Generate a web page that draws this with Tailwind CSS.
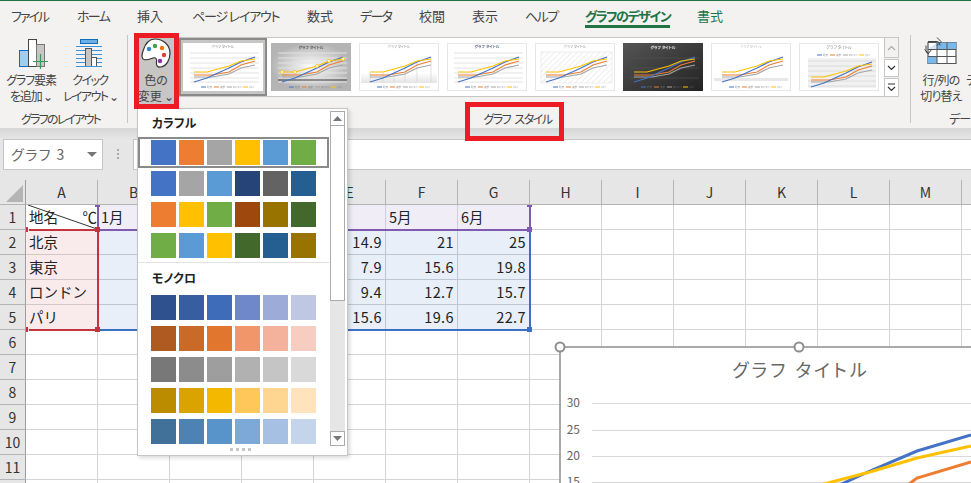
<!DOCTYPE html>
<html lang="ja">
<head>
  <meta charset="UTF-8" />
  <title>Excel グラフのデザイン</title>
  <script src="https://cdn.jsdelivr.net/npm/@tailwindcss/browser@4"></script>
</head>
<body class="bg-white font-['Noto_Sans_CJK_JP','Noto_Sans',sans-serif] text-[#333]">
<div class="relative w-[971px] h-[483px] overflow-hidden">

  <!-- shared bits for the style thumbnails -->
  <svg class="absolute w-0 h-0">
    <defs>
      <g id="series" fill="none" stroke-width="1.2">
        <polyline stroke="#a5a5a5" points="11,34 29,34 46,31 58,25 72,22" />
        <polyline stroke="#ed7d31" points="11,32 29,32 46,29 58,22 72,18" />
        <polyline stroke="#4472c4" points="11,39 24,35 46,25 58,19 72,14" />
        <polyline stroke="#ffc000" points="11,29 24,29 46,23 58,18 72,16" />
      </g>
      <g id="legend" stroke-width="1" font-size="2.6" fill="#777">
        <line x1="18" x2="23" y1="44" y2="44" stroke="#4472c4" /><text x="24" y="45">北京</text>
        <line x1="31" x2="36" y1="44" y2="44" stroke="#ed7d31" /><text x="37" y="45">東京</text>
        <line x1="44" x2="49" y1="44" y2="44" stroke="#a5a5a5" /><text x="50" y="45">ロンドン</text>
        <line x1="60" x2="65" y1="44" y2="44" stroke="#ffc000" /><text x="66" y="45">パリ</text>
      </g>
      <g id="grid" stroke="#e2e2e2" stroke-width="1">
        <line x1="7" x2="76" y1="10" y2="10" /><line x1="7" x2="76" y1="15" y2="15" />
        <line x1="7" x2="76" y1="20" y2="20" /><line x1="7" x2="76" y1="25" y2="25" />
        <line x1="7" x2="76" y1="30" y2="30" /><line x1="7" x2="76" y1="35" y2="35" />
        <line x1="7" x2="76" y1="39" y2="39" />
      </g>
      <linearGradient id="floor" x1="0" x2="0" y1="0" y2="1"><stop offset="0" stop-color="#fff" /><stop offset="1" stop-color="#e4e4e4" /></linearGradient>
      <radialGradient id="silver"><stop offset="0" stop-color="#fff" /><stop offset="1" stop-color="#b4b4b4" /></radialGradient>
      <linearGradient id="night" x1="0" x2="1" y1="0" y2="1"><stop offset="0" stop-color="#555" /><stop offset="1" stop-color="#222" /></linearGradient>
      <pattern id="hatch" width="4" height="4" patternUnits="userSpaceOnUse" patternTransform="rotate(45)"><line x1="0" x2="0" y1="0" y2="4" stroke="#d4d4d4" stroke-width="0.8" /></pattern>
    </defs>
  </svg>

  <!-- tabs -->
  <div class="border-t border-[#217346] bg-[#f3f2f1] h-[28px] flex pl-[11px] gap-[27px] text-[13px] leading-[30px] whitespace-nowrap text-[#444] [font-feature-settings:'palt']">
    <div class="w-[39px] tracking-[-2px]">ファイル</div>
    <div class="w-[33px] tracking-[-1.700px]">ホーム</div>
    <div class="w-[28px]">挿入</div>
    <div class="w-[88px] tracking-[-1.200px]">ページ レイアウト</div>
    <div class="w-[26px]">数式</div>
    <div class="w-[32px] tracking-[-1.700px]">データ</div>
    <div class="w-[26px]">校閲</div>
    <div class="w-[26px]">表示</div>
    <div class="w-[33px] tracking-[-1.500px]">ヘルプ</div>
    <div class="w-[85px] h-[27px] border-b-[3px] border-[#217346] text-[#217346] font-bold tracking-[-1.500px]">グラフのデザイン</div>
    <div class="w-[26px] text-[#217346]">書式</div>
  </div>

  <!-- ribbon -->
  <div class="bg-[#f3f2f1] h-[100px] flex text-[12px] leading-[16px] text-[#444] [font-feature-settings:'palt'] whitespace-nowrap">
    <div class="w-[127px] flex flex-col">
      <div class="h-[83px] flex pt-[9px]">
        <div class="w-[62px] flex flex-col items-center">
          <div class="h-[35px] ml-[5px]">
            <svg width="32" height="32" viewBox="0 0 32 32">
              <rect x="1.5" y="13.5" width="9" height="16" fill="#a3cdf0" stroke="#0f6cbd" />
              <rect x="10.5" y="2.5" width="8" height="27" fill="#fff" stroke="#444" />
              <rect x="18.5" y="7.5" width="8" height="22" fill="#c8c6c4" stroke="#777" />
              <path d="M15 24.5h15M22.5 17v15" stroke="#2f9e5b" stroke-width="1.2" />
            </svg>
          </div>
          <div class="text-center tracking-[-1.100px]">グラフ要素<br />を追加 ⌄</div>
        </div>
        <div class="w-[56px] flex flex-col items-center">
          <div class="h-[35px]">
            <svg width="32" height="32" viewBox="0 0 32 32">
              <rect x="6.5" y="2.5" width="17" height="4" fill="#6cb0e6" stroke="#0f6cbd" />
              <path d="M2 9.5h26M2 13.5h26M2 17.5h26M2 21.5h26M2 25.5h26" stroke="#3b95dd" />
              <rect x="11.5" y="11.5" width="6" height="18" fill="#c8c6c4" stroke="#555" />
              <rect x="17.5" y="20.5" width="5" height="9" fill="#fff" stroke="#555" />
              <path d="M2 29.5h26" stroke="#3b95dd" />
            </svg>
          </div>
          <div class="text-center tracking-[-1.600px]">クイック<br />レイアウト ⌄</div>
        </div>
      </div>
      <div class="text-center pr-[6px] tracking-[-1.800px]">グラフのレイアウト</div>
    </div>
    <div class="w-px h-[88px] mt-[7px] bg-[#c8c6c4]"></div>

    <div class="w-[782px] flex flex-col">
      <div class="h-[83px] flex pl-[10px] pt-[9px]">
        <div class="w-[36px] h-[68px] bg-[#c8c6c4] flex flex-col items-center">
          <div class="h-[35px] pt-[1px]">
            <svg width="30" height="30" viewBox="0 0 30 30">
              <path d="M14 1C22 1 29 7 29 15c0 6-3 13-9 14-4 .5-5-2-4.500-5 .5-3-.5-5-3.500-4-3 1-6 2.500-9 1.500C.5 21 .5 17 2 13 4 6 8 1 14 1Z" fill="#fff" stroke="#333" stroke-width="1.200" />
              <circle cx="8" cy="11" r="2.200" fill="#2e86d1" />
              <circle cx="14" cy="8" r="2.200" fill="#3fa34d" />
              <circle cx="21" cy="10" r="2.200" fill="#e8780c" />
              <circle cx="23" cy="17" r="2.200" fill="#e03c3c" />
              <circle cx="19" cy="23" r="2.200" fill="#8b2fa8" />
            </svg>
          </div>
          <div class="text-center">色の<br />変更 ⌄</div>
        </div>
        <div class="ml-[5px] w-[705px] h-[60px] bg-white border-y border-[#c8c6c4] flex">
          <div class="w-[88px] h-[58px] border-2 border-[#8a8a8a] bg-[#c8c6c4] flex items-center justify-center">
            <svg class="blur-[0.3px]" width="80" height="48" viewBox="0 0 80 48"><rect width="80" height="48" fill="#fff" /><text x="40" y="5" font-size="3.600" fill="#888" text-anchor="middle">グラフ タイトル</text><use href="#grid" /><use href="#series" /><use href="#legend" /></svg>
          </div>
          <div class="w-[88px] h-[58px] flex items-center justify-center">
            <svg class="blur-[0.3px]" width="80" height="48" viewBox="0 0 80 48"><rect width="80" height="48" fill="url(#silver)" /><text x="40" y="5.500" font-size="3.800" font-weight="700" fill="#555" text-anchor="middle">グラフ タイトル</text><use href="#grid" /><line x1="7" x2="76" y1="37" y2="37" stroke="#444" stroke-width="1" /><use href="#series" /><g fill="#fff" stroke="#ffc000" stroke-width="0.800"><circle cx="11" cy="29" r="1.500" /><circle cx="24" cy="29" r="1.500" /><circle cx="46" cy="23" r="1.500" /><circle cx="58" cy="18" r="1.500" /><circle cx="72" cy="16" r="1.500" /></g><use href="#legend" /></svg>
          </div>
          <div class="w-[88px] h-[58px] flex items-center justify-center">
            <svg class="blur-[0.3px]" width="80" height="48" viewBox="0 0 80 48"><rect x="0.500" y="0.500" width="79" height="47" fill="#fff" stroke="#e6e6e6" /><rect x="2" y="30" width="76" height="10" fill="url(#floor)" /><text x="40" y="5" font-size="3.600" fill="#999" text-anchor="middle">グラフ タイトル</text><path d="M11 39V29M24 39V29M35 39V25M46 39V23M58 39V18M72 39V14" stroke="#ccc" stroke-width="0.600" /><use href="#series" /><use href="#legend" /></svg>
          </div>
          <div class="w-[88px] h-[58px] flex items-center justify-center">
            <svg class="blur-[0.3px]" width="80" height="48" viewBox="0 0 80 48"><rect x="0.500" y="0.500" width="79" height="47" fill="#fff" stroke="#e6e6e6" /><text x="40" y="5" font-size="3.800" font-weight="700" fill="#5a6a80" text-anchor="middle">グラフ タイトル</text><g stroke="#eceff5"><use href="#grid" /></g><use href="#series" /><use href="#legend" /></svg>
          </div>
          <div class="w-[88px] h-[58px] flex items-center justify-center">
            <svg class="blur-[0.3px]" width="80" height="48" viewBox="0 0 80 48"><rect x="0.500" y="0.500" width="79" height="47" fill="#fff" stroke="#e6e6e6" /><rect x="6" y="9" width="71" height="31" fill="url(#hatch)" stroke="#ddd" stroke-width="0.500" /><text x="40" y="5" font-size="3.600" fill="#999" text-anchor="middle">グラフ タイトル</text><use href="#series" /><use href="#legend" /></svg>
          </div>
          <div class="w-[88px] h-[58px] flex items-center justify-center">
            <svg class="blur-[0.3px]" width="80" height="48" viewBox="0 0 80 48"><rect width="80" height="48" fill="url(#night)" /><text x="40" y="5.500" font-size="3.800" font-weight="700" fill="#eee" text-anchor="middle">グラフ タイトル</text><path d="M7 15h69M7 25h69M7 35h69" stroke="#555" stroke-width="0.600" /><use href="#series" /><use href="#legend" /></svg>
          </div>
          <div class="w-[88px] h-[58px] flex items-center justify-center">
            <svg class="blur-[0.3px]" width="80" height="48" viewBox="0 0 80 48"><rect x="0.500" y="0.500" width="79" height="47" fill="#fff" stroke="#e6e6e6" /><rect x="3" y="35" width="74" height="3" fill="#e8e8e8" /><text x="40" y="5" font-size="3.400" fill="#bbb" text-anchor="middle">グラフ タイトル</text><use href="#series" /><use href="#legend" /></svg>
          </div>
          <div class="w-[88px] h-[58px] flex items-center justify-center">
            <svg class="blur-[0.3px]" width="80" height="48" viewBox="0 0 80 48"><rect x="0.500" y="0.500" width="79" height="47" fill="#fff" stroke="#e6e6e6" /><rect x="9" y="15" width="68" height="30" fill="#f1f1f1" /><path d="M9 18h68M9 23h68M9 28h68M9 33h68M9 38h68M9 43h68" stroke="#dcdcdc" /><text x="40" y="6" font-size="4" fill="#888" text-anchor="middle">グラフ タイトル</text><g transform="translate(0 -32)"><use href="#legend" /></g><g transform="translate(1 5)"><use href="#series" /></g></svg>
          </div>
        </div>
        <div class="w-[15px] flex flex-col gap-[1px]">
          <div class="h-[21px] border border-[#c8c6c4] bg-[#f3f2f1] flex items-center justify-center">
            <svg width="9" height="6" viewBox="0 0 9 6"><path d="M1 5l3.500-3.500L8 5" fill="none" stroke="#aaa" stroke-width="1.200" /></svg>
          </div>
          <div class="h-[18px] border border-[#c8c6c4] bg-white flex items-center justify-center">
            <svg width="9" height="6" viewBox="0 0 9 6"><path d="M1 1l3.500 3.500L8 1" fill="none" stroke="#333" stroke-width="1.200" /></svg>
          </div>
          <div class="h-[19px] border border-[#c8c6c4] bg-white flex items-center justify-center">
            <svg width="9" height="9" viewBox="0 0 9 9"><path d="M1 1h7M1 4l3.500 3.500L8 4" fill="none" stroke="#333" stroke-width="1.200" /></svg>
          </div>
        </div>
      </div>
      <div class="text-center pr-[3px] tracking-[-1.500px] [word-spacing:3px]">グラフ スタイル</div>
    </div>
    <div class="w-px h-[88px] mt-[7px] bg-[#c8c6c4]"></div>

    <div class="flex-1 min-w-0 overflow-hidden flex flex-col">
      <div class="h-[83px] flex pt-[9px]">
        <div class="ml-[10px] w-[40px] shrink-0 flex flex-col items-center">
          <div class="h-[35px]">
            <svg width="36" height="30" viewBox="0 0 36 30">
              <path d="M5 5.500h28v21H5Z" fill="#fff" stroke="#555" stroke-width="1.200" />
              <path d="M14 5.500h19v7H14ZM5 19.500h9v7H5Z" fill="#7ab8ea" />
              <path d="M5 12.500 14 5.500v7Z" fill="#cfe4f6" />
              <path d="M5 12.500h28M5 19.500h28M14 5.500v21M24 5.500v21" stroke="#555" fill="none" />
              <path d="M5 4.500h8c3 0 4 1.500 4 4M14 .5l4 4-4 4M3 8.500v5c0 2 1 3 3 3M1.500 12.500l4 4 3-4" fill="none" stroke="#444" />
            </svg>
          </div>
          <div class="text-center tracking-[-0.800px]">行/列の<br />切り替え</div>
        </div>
        <div class="ml-[5px] pt-[35px]">デ</div>
      </div>
      <div class="pl-[38px] tracking-[-1px]">デー</div>
    </div>
  </div>

  <!-- name box and formula bar -->
  <div class="h-[52px] bg-[#e6e6e6]">
    <div class="h-[11px] bg-gradient-to-b from-[#d6d6d6] to-[#e6e6e6]"></div>
    <div class="flex pl-[3px]">
      <div class="w-[100px] h-[31px] bg-white border border-[#c8c6c4] flex items-center justify-between pl-[7px] pr-[5px] text-[14px] tracking-[1.500px] text-[#666] [font-feature-settings:'palt']">
        <span>グラフ 3</span>
        <svg width="10" height="5" viewBox="0 0 10 5"><path d="M0 0h10L5 5Z" fill="#777" /></svg>
      </div>
      <div class="w-[30px] flex flex-col items-center gap-[2px] pt-[10px]">
        <div class="w-[2px] h-[2px] bg-[#aaa]"></div>
        <div class="w-[2px] h-[2px] bg-[#aaa]"></div>
        <div class="w-[2px] h-[2px] bg-[#aaa]"></div>
      </div>
      <div class="flex-1 h-[31px] bg-white border border-[#c8c6c4] border-r-0"></div>
    </div>
  </div>

  <!-- sheet -->
  <div class="relative h-[303px] overflow-hidden">
    <div id="sheet" class="grid grid-cols-[26px_repeat(14,72px)] auto-rows-[25px] text-[14.500px] leading-[23px] text-[#222]"></div>

    <div class="absolute left-0 top-0 w-[26px] h-[25px] flex items-center justify-center">
      <svg width="24" height="24" viewBox="0 0 24 24"><path d="M22 4v17H5Z" fill="#b4b4b4" /></svg>
    </div>
    <svg class="absolute left-[26px] top-[25px]" width="72" height="25" viewBox="0 0 72 25"><line x1="2" y1="0" x2="71" y2="24" stroke="#333" /></svg>

    <!-- coloured range outlines that Excel draws around the chart data -->
    <div class="absolute left-[97px] top-[27px] w-[434px] h-[24px] border-x-2 border-b-2 border-[#7f5bb0]"></div>
    <div class="absolute left-[99px] top-[51px] w-[432px] h-[100px] border-r-2 border-b-2 border-[#3b6fc4]"></div>
    <div class="absolute left-[29px] top-[49px] w-[70px] h-[102px] border-y-2 border-r-2 border-[#c4333e]"></div>
    <div class="absolute left-[95px] top-[25px] w-[5px] h-[2px] bg-[#7f5bb0]"></div>
    <div class="absolute left-[527px] top-[25px] w-[5px] h-[2px] bg-[#7f5bb0]"></div>
    <div class="absolute left-[527px] top-[47px] w-[5px] h-[5px] bg-[#7f5bb0]"></div>
    <div class="absolute left-[527px] top-[147px] w-[5px] h-[5px] bg-[#3b6fc4]"></div>
    <div class="absolute left-[95px] top-[47px] w-[5px] h-[5px] bg-[#c4333e]"></div>
    <div class="absolute left-[95px] top-[147px] w-[5px] h-[5px] bg-[#c4333e]"></div>
    <div class="absolute left-[26px] top-[47px] w-[2px] h-[5px] bg-[#c4333e]"></div>
    <div class="absolute left-[26px] top-[147px] w-[2px] h-[5px] bg-[#c4333e]"></div>
  </div>

  <!-- chart, floats over the sheet and runs off the window -->
  <svg class="absolute left-[554px] top-[341px]" width="417" height="142" viewBox="554 341 417 142">
    <rect x="560" y="347" width="420" height="150" fill="#fff" stroke="#8f8f8f" stroke-width="1.500" />
    <g stroke="#d9d9d9"><line x1="592" x2="971" y1="403.500" y2="403.500" /><line x1="592" x2="971" y1="430.500" y2="430.500" /><line x1="592" x2="971" y1="456.500" y2="456.500" /><line x1="592" x2="971" y1="482.500" y2="482.500" /></g>
    <g font-size="12" fill="#666" text-anchor="end" font-family="'Noto Sans CJK JP',sans-serif"><text x="580" y="407">30</text><text x="580" y="434">25</text><text x="580" y="460">20</text><text x="580" y="486">15</text></g>
    <text x="801" y="377" font-size="18" fill="#666" text-anchor="middle" letter-spacing="3" font-family="'Noto Sans CJK JP',sans-serif" class="[font-feature-settings:'palt']">グラフ タイトル</text>
    <g fill="none" stroke-width="3">
      <polyline stroke="#ed7d31" points="905,487 917,478 971,462" />
      <polyline stroke="#4472c4" points="835,487 870,471 917,451 971,435" />
      <polyline stroke="#ffc000" points="820,485 870,472 917,458 971,446" />
    </g>
    <circle cx="560" cy="347" r="4.500" fill="#fff" stroke="#8f8f8f" stroke-width="2" />
    <circle cx="799" cy="347" r="4.500" fill="#fff" stroke="#8f8f8f" stroke-width="2" />
  </svg>

  <!-- colour dropdown -->
  <div class="absolute left-[137px] top-[108px] w-[211px] h-[348px] bg-white border border-[#c6c6c6] shadow-[2px_2px_4px_rgba(0,0,0,0.15)] flex">
    <div class="w-[192px] shrink-0">
      <div class="h-[28px] flex items-center pl-[14px] text-[12px] font-bold text-[#222] [font-feature-settings:'palt']">カラフル</div>
      <div class="w-[191px] h-[31px] border-2 border-[#8a8a8a] pl-[11px] pt-[1px] flex gap-[3px]">
        <div class="w-[25px] h-[25px] bg-[#4472c4]"></div><div class="w-[25px] h-[25px] bg-[#ed7d31]"></div><div class="w-[25px] h-[25px] bg-[#a5a5a5]"></div><div class="w-[25px] h-[25px] bg-[#ffc000]"></div><div class="w-[25px] h-[25px] bg-[#5b9bd5]"></div><div class="w-[25px] h-[25px] bg-[#70ad47]"></div>
      </div>
      <div class="pl-[13px] pt-[3px] flex flex-col gap-[6px]">
        <div class="flex gap-[3px]"><div class="w-[25px] h-[25px] bg-[#4472c4]"></div><div class="w-[25px] h-[25px] bg-[#a5a5a5]"></div><div class="w-[25px] h-[25px] bg-[#5b9bd5]"></div><div class="w-[25px] h-[25px] bg-[#264478]"></div><div class="w-[25px] h-[25px] bg-[#636363]"></div><div class="w-[25px] h-[25px] bg-[#255e91]"></div></div>
        <div class="flex gap-[3px]"><div class="w-[25px] h-[25px] bg-[#ed7d31]"></div><div class="w-[25px] h-[25px] bg-[#ffc000]"></div><div class="w-[25px] h-[25px] bg-[#70ad47]"></div><div class="w-[25px] h-[25px] bg-[#9e480e]"></div><div class="w-[25px] h-[25px] bg-[#997300]"></div><div class="w-[25px] h-[25px] bg-[#43682b]"></div></div>
        <div class="flex gap-[3px]"><div class="w-[25px] h-[25px] bg-[#70ad47]"></div><div class="w-[25px] h-[25px] bg-[#5b9bd5]"></div><div class="w-[25px] h-[25px] bg-[#ffc000]"></div><div class="w-[25px] h-[25px] bg-[#43682b]"></div><div class="w-[25px] h-[25px] bg-[#255e91]"></div><div class="w-[25px] h-[25px] bg-[#997300]"></div></div>
      </div>
      <div class="mt-[4px] h-px w-[191px] bg-[#e1e1e1]"></div>
      <div class="h-[32px] pb-[2px] flex items-center pl-[14px] text-[12px] font-bold text-[#222] [font-feature-settings:'palt']">モノクロ</div>
      <div class="pl-[13px] flex flex-col gap-[6px]">
        <div class="flex gap-[3px]"><div class="w-[25px] h-[25px] bg-[#2f528f]"></div><div class="w-[25px] h-[25px] bg-[#385ea2]"></div><div class="w-[25px] h-[25px] bg-[#3f6cb9]"></div><div class="w-[25px] h-[25px] bg-[#6f88c9]"></div><div class="w-[25px] h-[25px] bg-[#9dabd8]"></div><div class="w-[25px] h-[25px] bg-[#bec8e3]"></div></div>
        <div class="flex gap-[3px]"><div class="w-[25px] h-[25px] bg-[#ae5a21]"></div><div class="w-[25px] h-[25px] bg-[#c96a28]"></div><div class="w-[25px] h-[25px] bg-[#e1772e]"></div><div class="w-[25px] h-[25px] bg-[#f1956a]"></div><div class="w-[25px] h-[25px] bg-[#f4b19b]"></div><div class="w-[25px] h-[25px] bg-[#f7cdc1]"></div></div>
        <div class="flex gap-[3px]"><div class="w-[25px] h-[25px] bg-[#787878]"></div><div class="w-[25px] h-[25px] bg-[#8c8c8c]"></div><div class="w-[25px] h-[25px] bg-[#9e9e9e]"></div><div class="w-[25px] h-[25px] bg-[#b1b1b1]"></div><div class="w-[25px] h-[25px] bg-[#c5c5c5]"></div><div class="w-[25px] h-[25px] bg-[#d9d9d9]"></div></div>
        <div class="flex gap-[3px]"><div class="w-[25px] h-[25px] bg-[#bc8c00]"></div><div class="w-[25px] h-[25px] bg-[#daa300]"></div><div class="w-[25px] h-[25px] bg-[#f4b800]"></div><div class="w-[25px] h-[25px] bg-[#ffc759]"></div><div class="w-[25px] h-[25px] bg-[#ffd592]"></div><div class="w-[25px] h-[25px] bg-[#ffe3bd]"></div></div>
        <div class="flex gap-[3px]"><div class="w-[25px] h-[25px] bg-[#417099]"></div><div class="w-[25px] h-[25px] bg-[#4d82b4]"></div><div class="w-[25px] h-[25px] bg-[#5894ca]"></div><div class="w-[25px] h-[25px] bg-[#7da9d8]"></div><div class="w-[25px] h-[25px] bg-[#a5c0e2]"></div><div class="w-[25px] h-[25px] bg-[#c4d4ea]"></div></div>
      </div>
      <div class="flex justify-center gap-[3px] pt-[4px] pl-[13px]">
        <div class="w-[3px] h-[3px] bg-[#c6c6c6]"></div><div class="w-[3px] h-[3px] bg-[#c6c6c6]"></div><div class="w-[3px] h-[3px] bg-[#c6c6c6]"></div><div class="w-[3px] h-[3px] bg-[#c6c6c6]"></div>
      </div>
    </div>
    <div class="w-[15px] h-[335px] mt-[2px] bg-[#e6e6e6] flex flex-col">
      <div class="h-[15px] bg-white border border-[#ababab] flex items-center justify-center">
        <svg width="9" height="5" viewBox="0 0 9 5"><path d="M0 5h9L4.500 0Z" fill="#777" /></svg>
      </div>
      <div class="h-[175px] bg-white border-x border-b border-[#ababab]"></div>
      <div class="flex-1"></div>
      <div class="h-[15px] bg-white border border-[#ababab] flex items-center justify-center">
        <svg width="9" height="5" viewBox="0 0 9 5"><path d="M0 0h9L4.500 5Z" fill="#777" /></svg>
      </div>
    </div>
  </div>

  <!-- red annotation boxes -->
  <div class="absolute left-[134px] top-[33px] w-[45px] h-[76px] border-[5px] border-[#ed1c24]"></div>
  <div class="absolute left-[465px] top-[102px] w-[99px] h-[39px] border-[5px] border-[#ed1c24]"></div>
</div>

<script>
  const cols = ['A', 'B', 'C', 'D', 'E', 'F', 'G', 'H', 'I', 'J', 'K', 'L', 'M', ''];
  const data = {
    1: { B: '1月', F: '5月', G: '6月' },
    2: { A: '北京', E: '14.9', F: '21', G: '25' },
    3: { A: '東京', E: '7.9', F: '15.6', G: '19.8' },
    4: { A: 'ロンドン', E: '9.4', F: '12.7', G: '15.7' },
    5: { A: 'パリ', E: '15.6', F: '19.6', G: '22.7' },
  };
  const headCell = 'bg-[#e6e6e6] border-r border-b border-[#b4b4b4] text-center text-[#333] text-[14px] leading-[25px]';
  const rowHead = 'bg-[#e6e6e6] border-r border-b border-r-[#9e9e9e] border-b-[#b4b4b4] text-center text-[#333] text-[14px] leading-[24px]';
  const plain = 'border-r border-b border-[#d4d4d4] whitespace-nowrap overflow-hidden';
  const purple = 'bg-[#f0edf7] border-r border-b border-[#d0ccdc] pl-[3px] whitespace-nowrap overflow-hidden';
  const blue = 'bg-[#e8eff8] border-r border-b border-[#bcc6d3] pr-[3px] text-right whitespace-nowrap overflow-hidden tracking-[0.4px]';
  const pink = 'bg-[#f9ebeb] border-r border-b border-[#d3c6c6] pl-[3px] whitespace-nowrap overflow-hidden';

  let html = '<div class="' + rowHead + '"></div>';
  cols.forEach(c => { html += '<div class="' + headCell + '">' + c + '</div>'; });

  // row 12 only shows its top edge in the window, so it has no number
  for (let r = 1; r <= 12; r++) {
    html += '<div class="' + rowHead + '">' + (r < 12 ? r : '') + '</div>';
    cols.forEach((c, i) => {
      const text = (data[r] && data[r][c]) || '';
      let cls = plain;
      if (r <= 5 && i <= 6) {
        if (r === 1) cls = i === 0 ? plain : purple;
        else cls = i === 0 ? pink : blue;
      }
      if (r === 1 && i === 0) {
        html += '<div class="' + plain + ' flex justify-between pl-[3px]"><span>地名</span><span>℃</span></div>';
      } else {
        html += '<div class="' + cls + '">' + text + '</div>';
      }
    });
  }
  document.getElementById('sheet').innerHTML = html;
</script>
</body>
</html>
